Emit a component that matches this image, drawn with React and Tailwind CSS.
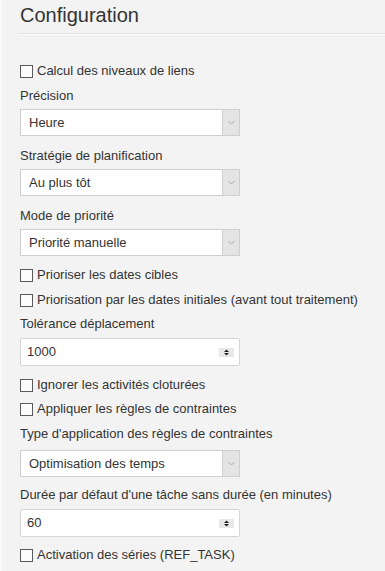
import React from 'react';

const font = { fontFamily: '"Liberation Sans", Arial, sans-serif' };

const Checkbox = ({ label, className = '' }) => (
  <label className={`flex h-[24px] items-center gap-[4px] text-[13px] text-[#333] ${className}`}>
    <span className="h-[13px] w-[13px] shrink-0 border border-[#5a5a5a] bg-[#fbfbfb]" />
    <span>{label}</span>
  </label>
);

const Label = ({ children, className = '' }) => (
  <div className={`h-[20px] text-[13px] leading-[20px] text-[#333] ${className}`}>{children}</div>
);

const Select = ({ value, className = '' }) => (
  <div className={`flex h-[27px] w-[220px] border border-[#cfcfcf] bg-white ${className}`}>
    <div className="flex flex-1 items-center pl-[8px] text-[13px] text-[#333]">{value}</div>
    <div className="flex w-[17px] items-center justify-center border-l border-[#d0d0d0] bg-[#e4e4e4]">
      <svg width="7" height="5" viewBox="0 0 7 5">
        <path d="M0.5 1 L3.5 4 L6.5 1" fill="none" stroke="#a8a8a8" strokeWidth="1" />
      </svg>
    </div>
  </div>
);

const NumberInput = ({ value, className = '' }) => (
  <div className={`flex h-[28px] w-[220px] items-center rounded-[2px] border border-[#d6d6d6] bg-white ${className}`}>
    <div className="flex-1 pl-[6px] text-[13px] text-[#333]">{value}</div>
    <svg width="15" height="9" viewBox="0 0 15 9" className="mr-[5px]">
      <rect x="0" y="0" width="15" height="9" fill="#e8e8e8" />
      <path d="M5 4 L7.5 1.5 L10 4 Z" fill="#222" />
      <path d="M5 5 L7.5 7.5 L10 5 Z" fill="#222" />
    </svg>
  </div>
);

const App = () => {
  return (
    <div className="min-h-[571px] w-[385px] border-l-[2px] border-[#fafafa] bg-[#f3f3f3] pl-[18px]" style={font}>
      <div className="h-[34px] border-b border-[#e1e1e1] pt-[3px] text-[20px] leading-[24px] text-[#333] shadow-[0_1px_0_#ffffff]">
        Configuration
      </div>

      <Checkbox label="Calcul des niveaux de liens" className="mt-[25px]" />

      <Label className="mt-[3px]">Précision</Label>
      <Select value="Heure" className="mt-[3px]" />

      <Label className="mt-[10px]">Stratégie de planification</Label>
      <Select value="Au plus tôt" className="mt-[3px]" />

      <Label className="mt-[10px]">Mode de priorité</Label>
      <Select value="Priorité manuelle" className="mt-[3px]" />

      <Checkbox label="Prioriser les dates cibles" className="mt-[7px]" />
      <Checkbox label="Priorisation par les dates initiales (avant tout traitement)" className="mt-[1px]" />

      <Label className="mt-[2px]">Tolérance déplacement</Label>
      <NumberInput value="1000" className="mt-[4px]" />

      <Checkbox label="Ignorer les activités cloturées" className="mt-[7px]" />
      <Checkbox label="Appliquer les règles de contraintes" />

      <Label className="mt-[3px]">Type d'application des règles de contraintes</Label>
      <Select value="Optimisation des temps" className="mt-[6px]" />

      <Label className="mt-[8px]">Durée par défaut d'une tâche sans durée (en minutes)</Label>
      <NumberInput value="60" className="mt-[4px]" />

      <Checkbox label="Activation des séries (REF_TASK)" className="mt-[6px]" />
    </div>
  );
};

export default App;
